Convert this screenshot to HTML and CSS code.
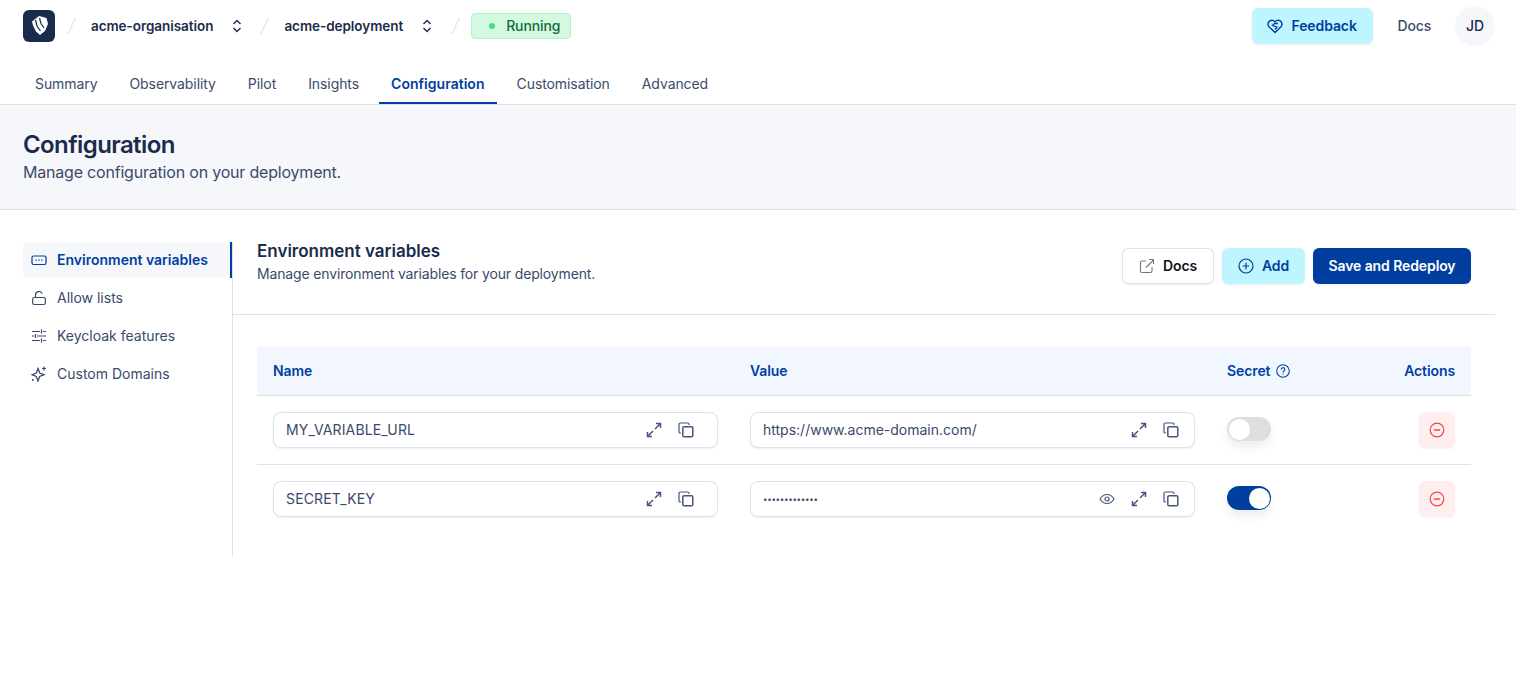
FILE: index.html
```html
<!DOCTYPE html>
<html lang="en">
<head>
    <meta charset="UTF-8">
    <title>Configuration</title>
    <link rel="stylesheet" href="styles.css">
</head>
<body>
    <svg class="icon-defs" width="0" height="0">
        <defs>
            <symbol id="i-expand" viewBox="0 0 16 16"><path d="M9 7 14.500 1.500M10 1.500h4.500V6M7 9 1.500 14.500M1.500 10v4.500H6" fill="none" stroke="currentColor" stroke-width="1.500"/></symbol>
            <symbol id="i-copy" viewBox="0 0 16 16"><path d="M3 11H2.300A1.300 1.300 0 0 1 1 9.700V2.300A1.300 1.300 0 0 1 2.300 1h7.400A1.300 1.300 0 0 1 11 2.300V3" fill="none" stroke="currentColor" stroke-width="1.200"/><rect x="4.800" y="4.800" width="10" height="10" rx="1.300" fill="none" stroke="currentColor" stroke-width="1.500"/></symbol>
            <symbol id="i-minus" viewBox="0 0 16 16"><circle cx="8" cy="8" r="6.800" fill="none" stroke="currentColor" stroke-width="1.200"/><path d="M5 8h6" stroke="currentColor" stroke-width="1.500"/></symbol>
        </defs>
    </svg>

    <header class="topbar">
        <div class="topbar-row">
            <div class="crumbs">
                <div class="logo">
                    <svg width="32" height="32" viewBox="0 0 32 32"><path d="M9 11.500 16 6l7.500 2 1.500 6-3 7-5 4-4-3.500-3-6z" fill="#fff"/><path d="M12.500 10l1.500 6 3.500 5M16.500 8l1.500 5.500 3 4.500" fill="none" stroke="#1a2b4b" stroke-width="1.200"/></svg>
                </div>
                <span class="slash first"></span>
                <span class="crumb">acme-organisation</span>
                <svg class="updown" width="12" height="14" viewBox="0 0 12 14"><path d="M2.500 5 6 1.500 9.500 5M2.500 9 6 12.500 9.500 9" fill="none" stroke="currentColor" stroke-width="1.400"/></svg>
                <span class="slash"></span>
                <span class="crumb">acme-deployment</span>
                <svg class="updown" width="12" height="14" viewBox="0 0 12 14"><path d="M2.500 5 6 1.500 9.500 5M2.500 9 6 12.500 9.500 9" fill="none" stroke="currentColor" stroke-width="1.400"/></svg>
                <span class="slash last"></span>
                <span class="status"><span class="status-dot"></span>Running</span>
            </div>
            <div class="top-actions">
                <button class="btn btn-light feedback">
                    <svg width="16" height="16" viewBox="0 0 16 16"><path d="M8 14.500 2 8.700C.4 7 .8 4 2.800 2.800c1.800-1 3.700-.6 5.200 1 1.500-1.600 3.400-2 5.200-1 2 1.200 2.400 4.200.8 5.900z" fill="none" stroke="currentColor" stroke-width="1.400"/><path d="M11 5.500H7.500L5.500 7.500 10 9l-2 2.500" fill="none" stroke="currentColor" stroke-width="1.300"/></svg>
                    Feedback
                </button>
                <a class="top-docs">Docs</a>
                <div class="avatar">JD</div>
            </div>
        </div>
        <nav class="tabs">
            <a class="tab">Summary</a>
            <a class="tab">Observability</a>
            <a class="tab">Pilot</a>
            <a class="tab">Insights</a>
            <a class="tab active">Configuration</a>
            <a class="tab">Customisation</a>
            <a class="tab">Advanced</a>
        </nav>
    </header>

    <section class="page-head">
        <h1>Configuration</h1>
        <p>Manage configuration on your deployment.</p>
    </section>

    <main class="layout">
        <aside class="sidebar">
            <a class="side-item active">
                <svg width="16" height="16" viewBox="0 0 16 16"><rect x="1" y="4" width="14" height="8.500" rx="1.500" fill="none" stroke="currentColor" stroke-width="1.200"/><path d="M4.500 8.200h1.300M7.400 8.200h1.300M10.200 8.200h1.300" stroke="currentColor" stroke-width="1.200"/></svg>
                Environment variables
            </a>
            <a class="side-item">
                <svg width="16" height="16" viewBox="0 0 16 16"><rect x="1.700" y="7.500" width="12.600" height="7" rx="1.500" fill="none" stroke="currentColor" stroke-width="1.200"/><path d="M4.500 7.500V5a3.500 3.500 0 0 1 6.700-1.400" fill="none" stroke="currentColor" stroke-width="1.200"/></svg>
                Allow lists
            </a>
            <a class="side-item">
                <svg width="16" height="16" viewBox="0 0 16 16"><path d="M1 3.500h8M12 3.500h3M10.500 1.500v4M1 8h2M6 8h9M4.500 6v4M1 12.500h8M12 12.500h3M10.500 10.500v4" fill="none" stroke="currentColor" stroke-width="1.200"/></svg>
                Keycloak features
            </a>
            <a class="side-item">
                <svg width="16" height="16" viewBox="0 0 16 16"><path d="M7 2.500 8.700 7 13 8.700 8.700 10.400 7 15 5.300 10.400 1 8.700 5.300 7z" fill="none" stroke="currentColor" stroke-width="1.300"/><path d="M13 .5v4M11 2.500h4" stroke="currentColor" stroke-width="1.200"/><circle cx="1.800" cy="14" r="1" fill="currentColor"/></svg>
                Custom Domains
            </a>
        </aside>

        <div class="content">
            <div class="content-head">
                <div>
                    <h2>Environment variables</h2>
                    <p>Manage environment variables for your deployment.</p>
                </div>
                <div class="content-actions">
                    <button class="btn btn-outline">
                        <svg width="16" height="16" viewBox="0 0 16 16"><path d="M7 3H3a1.500 1.500 0 0 0-1.500 1.500V13A1.500 1.500 0 0 0 3 14.500h8.500A1.500 1.500 0 0 0 13 13V9M7 9.500 14.500 2M10 1.500h4.500V6" fill="none" stroke="#777" stroke-width="1.100"/></svg>
                        Docs
                    </button>
                    <button class="btn btn-light add">
                        <svg width="16" height="16" viewBox="0 0 16 16"><circle cx="8" cy="8" r="7" fill="none" stroke="currentColor" stroke-width="1.200"/><path d="M8 4.800v6.400M4.800 8h6.400" stroke="currentColor" stroke-width="1.200"/></svg>
                        Add
                    </button>
                    <button class="btn btn-primary">Save and Redeploy</button>
                </div>
            </div>

            <div class="table-wrap">
                <div class="row table-head">
                    <div class="cell-name">Name</div>
                    <div class="cell-value">Value</div>
                    <div class="cell-secret">Secret
                        <svg width="14" height="14" viewBox="0 0 14 14"><circle cx="7" cy="7" r="6.300" fill="none" stroke="currentColor" stroke-width="1.100"/><path d="M5.200 5.500a1.800 1.800 0 1 1 2.600 1.600C7.200 7.400 7 7.800 7 8.400M7 9.600v1" fill="none" stroke="currentColor" stroke-width="1.100"/></svg>
                    </div>
                    <div class="cell-actions">Actions</div>
                </div>

                <div class="row table-row">
                    <div class="cell-name">
                        <div class="field name-field">
                            <span class="field-text upper">MY_VARIABLE_URL</span>
                            <svg class="field-icon" width="16" height="16"><use href="#i-expand"/></svg>
                            <svg class="field-icon" width="16" height="16"><use href="#i-copy"/></svg>
                        </div>
                    </div>
                    <div class="cell-value">
                        <div class="field">
                            <span class="field-text">https://www.acme-domain.com/</span>
                            <svg class="field-icon" width="16" height="16"><use href="#i-expand"/></svg>
                            <svg class="field-icon" width="16" height="16"><use href="#i-copy"/></svg>
                        </div>
                    </div>
                    <div class="cell-secret"><span class="toggle"><span class="knob"></span></span></div>
                    <div class="cell-actions"><button class="remove"><svg width="16" height="16"><use href="#i-minus"/></svg></button></div>
                </div>

                <div class="row table-row">
                    <div class="cell-name">
                        <div class="field name-field">
                            <span class="field-text upper">SECRET_KEY</span>
                            <svg class="field-icon" width="16" height="16"><use href="#i-expand"/></svg>
                            <svg class="field-icon" width="16" height="16"><use href="#i-copy"/></svg>
                        </div>
                    </div>
                    <div class="cell-value">
                        <div class="field">
                            <span class="field-text dots">&bull;&bull;&bull;&bull;&bull;&bull;&bull;&bull;&bull;&bull;&bull;&bull;&bull;</span>
                            <svg class="field-icon" width="16" height="16" viewBox="0 0 16 16"><path d="M1 8c1.800-3 4-4.500 7-4.500S13.200 5 15 8c-1.800 3-4 4.500-7 4.500S2.800 11 1 8z" fill="none" stroke="currentColor" stroke-width="1.200"/><circle cx="8" cy="8" r="2" fill="none" stroke="currentColor" stroke-width="1.200"/></svg>
                            <svg class="field-icon" width="16" height="16"><use href="#i-expand"/></svg>
                            <svg class="field-icon" width="16" height="16"><use href="#i-copy"/></svg>
                        </div>
                    </div>
                    <div class="cell-secret"><span class="toggle on"><span class="knob"></span></span></div>
                    <div class="cell-actions"><button class="remove"><svg width="16" height="16"><use href="#i-minus"/></svg></button></div>
                </div>
            </div>
        </div>
    </main>
</body>
</html>
```

FILE: styles.css
```css
* {
    box-sizing: border-box;
}

body {
    margin: 0;
    font-family: Inter, "Liberation Sans", sans-serif;
    line-height: 16px;
    color: #1a2b4b;
    background: #fff;
}

h1, h2, p {
    margin: 0;
}

button {
    font-family: inherit;
    line-height: 16px;
}

.icon-defs {
    position: absolute;
}

.topbar {
    height: 105px;
    border-bottom: 1px solid #dfe1e8;
}

.topbar-row {
    height: 52px;
    padding: 0 21px 0 23px;
    display: flex;
    justify-content: space-between;
    align-items: center;
}

.crumbs {
    display: flex;
    align-items: center;
}

.logo {
    width: 32px;
    height: 32px;
    border-radius: 6px;
    background: #1a2b4b;
    display: flex;
}

.slash {
    width: 1px;
    height: 18px;
    margin: 0 19px 0 21px;
    background: #d8dbe3;
    transform: rotate(25deg);
}

.slash.first {
    margin: 0 19px 0 16px;
}

.slash.last {
    margin: 0 15px 0 22px;
}

.crumb {
    font-size: 13.5px;
    font-weight: 600;
    letter-spacing: -0.05px;
}

.updown {
    margin-left: 18px;
    color: #1a2b4b;
}

.status {
    height: 26px;
    width: 100px;
    padding-left: 17px;
    display: flex;
    align-items: center;
    gap: 11px;
    font-size: 14px;
    font-weight: 500;
    letter-spacing: -0.1px;
    color: #0f6b3a;
    background: #d3f9e0;
    border: 1px solid #b5f0ca;
    border-radius: 4px;
}

.status-dot {
    width: 6px;
    height: 6px;
    border-radius: 50%;
    background: #4ade80;
}

.top-actions {
    display: flex;
    align-items: center;
}

.btn {
    height: 36px;
    display: flex;
    align-items: center;
    justify-content: center;
    gap: 8px;
    font-size: 14px;
    font-weight: 600;
    letter-spacing: -0.1px;
    border-radius: 6px;
    border: none;
    box-shadow: 0 1px 2px rgba(26, 43, 75, 0.08);
}

.btn-light {
    background: #bff5ff;
    color: #003fa0;
}

.feedback {
    width: 121px;
}

.top-docs {
    margin: 0 24px 0 25px;
    font-size: 14px;
    font-weight: 500;
    letter-spacing: -0.2px;
    color: #3a4a6b;
}

.avatar {
    width: 40px;
    height: 40px;
    border-radius: 50%;
    background: #f6f7fb;
    display: flex;
    align-items: center;
    justify-content: center;
    font-size: 14px;
    font-weight: 500;
}

.tabs {
    height: 52px;
    padding: 14px 0 0 23px;
    display: flex;
    gap: 8px;
}

.tab {
    padding: 0 12px;
    height: 38px;
    display: flex;
    align-items: center;
    font-size: 14px;
    letter-spacing: -0.08px;
    color: #3a4a6b;
    border-bottom: 2px solid transparent;
}

.tab.active {
    color: #003fa0;
    font-weight: 600;
    letter-spacing: 0.03px;
    border-bottom-color: #003fa0;
}

.page-head {
    height: 105px;
    padding: 26px 23px 0;
    background: #f6f7fb;
    border-bottom: 1px solid #dfe1e8;
}

.page-head h1 {
    font-size: 24px;
    line-height: 28px;
    font-weight: 600;
    letter-spacing: -0.6px;
}

.page-head p {
    margin-top: 2px;
    font-size: 16px;
    line-height: 22px;
    letter-spacing: -0.2px;
    color: #3a4a6b;
}

.layout {
    display: flex;
    padding: 32px 21px 0 23px;
}

.sidebar {
    width: 210px;
    height: 315px;
    border-right: 1px solid #dfe1e8;
    display: flex;
    flex-direction: column;
    gap: 2px;
}

.side-item {
    height: 36px;
    padding-left: 8px;
    display: flex;
    align-items: center;
    gap: 10px;
    font-size: 14px;
    color: #3a4a6b;
    border-right: 2px solid transparent;
}

.side-item.active {
    color: #003fa0;
    font-weight: 600;
    background: #f6f7fb;
    border-right-color: #003fa0;
    border-radius: 6px 0 0 6px;
}

.content {
    flex: 1;
}

.content-head {
    height: 73px;
    padding: 0 24px 0 24px;
    border-bottom: 1px solid #dfe1e8;
    display: flex;
    justify-content: space-between;
}

.content-head h2 {
    margin-top: -1px;
    font-size: 17px;
    line-height: 20px;
    font-weight: 600;
}

.content-head p {
    margin-top: 4px;
    font-size: 14px;
    line-height: 18px;
    letter-spacing: -0.15px;
    color: #3a4a6b;
}

.content-actions {
    display: flex;
    gap: 8px;
    padding-top: 6px;
}

.btn-outline {
    width: 92px;
    background: #fff;
    border: 1px solid #dfe1e8;
    color: #111;
}

.add {
    width: 83px;
}

.btn-primary {
    width: 158px;
    background: #003fa0;
    color: #fff;
}

.table-wrap {
    margin: 32px 24px 0;
}

.row {
    display: grid;
    grid-template-columns: 477px 477px 1fr 80px;
    align-items: center;
}

.table-head {
    height: 49px;
    background: #f2f7ff;
    border-bottom: 1px solid #dfe1e8;
    font-size: 14px;
    font-weight: 600;
    letter-spacing: -0.1px;
    color: #003fa0;
}

.cell-name, .cell-value, .cell-secret {
    padding-left: 16px;
}

.cell-secret {
    display: flex;
    align-items: center;
    gap: 6px;
}

.cell-actions {
    padding-right: 16px;
    text-align: right;
}

.table-row {
    height: 69px;
    border-bottom: 1px solid #dfe1e8;
}

.table-row:last-child {
    height: 68px;
    border-bottom: none;
}

.field {
    width: 445px;
    height: 36px;
    padding: 0 15px 0 12px;
    display: flex;
    align-items: center;
    gap: 16px;
    background: #fff;
    border: 1px solid #dfe1e8;
    border-radius: 8px;
    box-shadow: 0 1px 2px rgba(26, 43, 75, 0.08);
}

.name-field {
    padding-right: 23px;
}

.field-text {
    flex: 1;
    font-size: 14px;
    color: #3a4a6b;
}

.field-text.upper {
    letter-spacing: 0.15px;
}

.field-text.dots {
    font-size: 8px;
    letter-spacing: -0.3px;
}

.field-icon {
    color: #46557a;
    flex: none;
}

.toggle {
    width: 44px;
    height: 24px;
    margin-bottom: 2px;
    padding: 1.5px;
    border-radius: 12px;
    background: #dedede;
    display: flex;
    box-shadow: 0 6px 10px rgba(26, 43, 75, 0.08);
}

.toggle.on {
    background: #003fa0;
    justify-content: flex-end;
}

.knob {
    width: 21px;
    height: 21px;
    border-radius: 50%;
    background: #fff;
}

.remove {
    width: 36px;
    height: 36px;
    padding: 0;
    border: none;
    border-radius: 6px;
    background: #ffeeee;
    color: #f0444a;
    box-shadow: 0 1px 2px rgba(26, 43, 75, 0.06);
    display: inline-flex;
    align-items: center;
    justify-content: center;
    vertical-align: middle;
}
```
